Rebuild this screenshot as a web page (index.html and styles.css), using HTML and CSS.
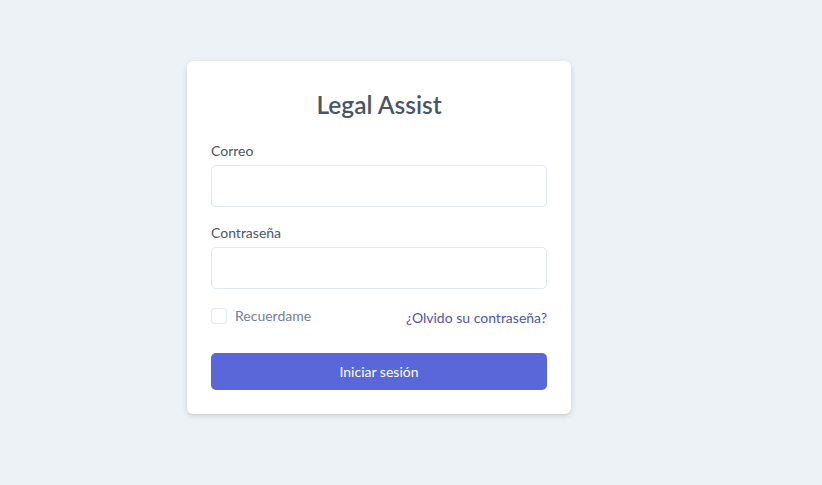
FILE: index.html
```html
<!DOCTYPE html>
<html lang="es">
<head>
<meta charset="utf-8">
<title>Legal Assist</title>
<link rel="stylesheet" href="styles.css">
</head>
<body>
<div class="page">
  <form class="card">
    <h1 class="title">Legal Assist</h1>
    <div class="field">
      <label class="label" for="email">Correo</label>
      <input class="input" id="email" type="email">
    </div>
    <div class="field">
      <label class="label" for="pass">Contraseña</label>
      <input class="input" id="pass" type="password">
    </div>
    <div class="row">
      <label class="remember"><span class="box"></span><span>Recuerdame</span></label>
      <a class="link" href="#">¿Olvido su contraseña?</a>
    </div>
    <button class="btn" type="button">Iniciar sesión</button>
  </form>
</div>
</body>
</html>
```
FILE: styles.css
```css
* { box-sizing: border-box; }
html, body { margin: 0; padding: 0; }
body {
  background: #edf2f7;
  font-family: Lato, "Noto Sans", sans-serif;
  color: #4a5568;
  width: 822px;
  height: 485px;
}
.page {
  padding-top: 61px;
  padding-left: 187px;
}
.card {
  width: 384px;
  background: #fff;
  border-radius: 6px;
  box-shadow: 0 2px 6px rgba(0,0,0,0.12), 0 1px 2px rgba(0,0,0,0.06);
  padding: 28px 24px 24px;
  display: flex;
  flex-direction: column;
}
.title {
  margin: 0 0 20px;
  font-size: 24.5px;
  line-height: 32px;
  font-weight: 600;
  text-align: center;
  color: #4a5568;
}
.field {
  display: flex;
  flex-direction: column;
  margin-bottom: 16px;
}
.label {
  font-size: 14px;
  line-height: 20px;
  margin-bottom: 4px;
  color: #4a5568;
}
.input {
  height: 42px;
  border: 1px solid #e2e8f0;
  border-radius: 5px;
  background: #fff;
  font: inherit;
  padding: 0 12px;
}
.row {
  display: flex;
  justify-content: space-between;
  align-items: flex-end;
  margin-top: 1px;
  margin-bottom: 27px;
}
.remember {
  display: flex;
  align-items: center;
  gap: 8px;
  font-size: 14px;
  line-height: 20px;
  color: #718096;
}
.box {
  width: 16px;
  height: 16px;
  border: 1px solid #e2e8f0;
  border-radius: 3px;
}
.link {
  font-size: 14px;
  line-height: 20px;
  color: #4f54ad;
  text-decoration: none;
  position: relative;
  top: 2px;
}
.btn {
  height: 37px;
  border: 0;
  border-radius: 5px;
  background: #5a67d8;
  color: #fff;
  font: inherit;
  font-size: 14px;
}
```
